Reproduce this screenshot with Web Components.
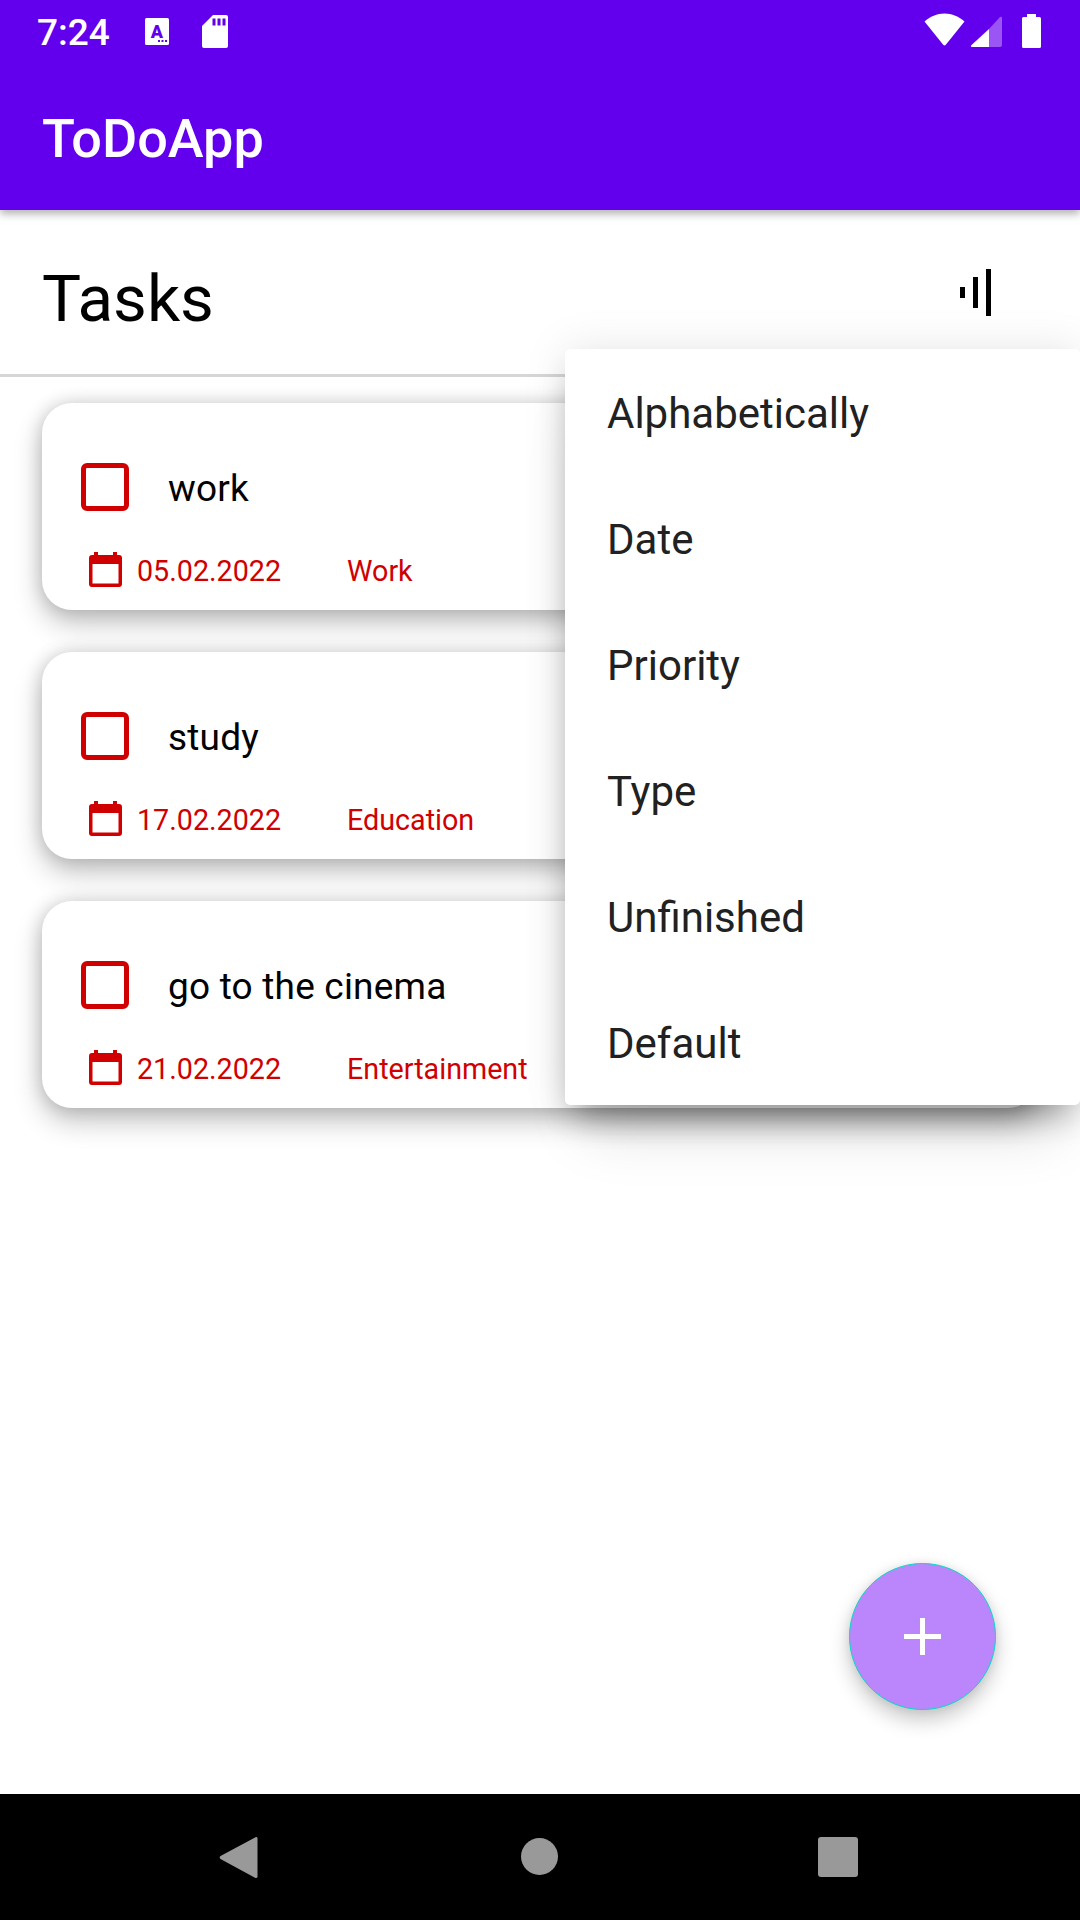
<!DOCTYPE html>
<html>
<head>
<meta charset="utf-8">
<title>ToDoApp</title>
<style>
  html, body { margin: 0; padding: 0; background: #fff; }
  body { font-family: Roboto, "Liberation Sans", sans-serif; }
</style>
</head>
<body>
<todo-app>
  <task-card title="work" date="05.02.2022" type="Work"></task-card>
  <task-card title="study" date="17.02.2022" type="Education"></task-card>
  <task-card title="go to the cinema" date="21.02.2022" type="Entertainment"></task-card>
  <sort-menu slot="menu">
    <menu-item>Alphabetically</menu-item>
    <menu-item>Date</menu-item>
    <menu-item>Priority</menu-item>
    <menu-item>Type</menu-item>
    <menu-item>Unfinished</menu-item>
    <menu-item>Default</menu-item>
  </sort-menu>
</todo-app>
<script>
(function() {
  function define(name, html, init) {
    const template = document.createElement("template");
    template.innerHTML = html;
    customElements.define(name, class extends HTMLElement {
      constructor() {
        super();
        this.attachShadow({ mode: "open" });
        this.shadowRoot.appendChild(template.content.cloneNode(true));
      }
      connectedCallback() {
        if (init) init(this, this.shadowRoot);
      }
    });
  }

  define("status-bar", `
    <style>
      :host { display: flex; align-items: flex-start; height: 63px; color: #fff; position: relative; }
      .time { margin: 11px 0 0 37px; font-size: 37px; line-height: 44px; font-weight: 500; width: 108px; }
      svg { display: block; flex: none; }
      .note { margin-top: 18px; }
      .sd { margin: 15px 0 0 33px; }
      .wifi { margin: 13px 0 0 auto; }
      .signal { margin: 16px 0 0 6px; }
      .battery { margin: 14px 39px 0 20px; }
    </style>
    <span class="time">7:24</span>
    <svg class="note" width="24" height="27" viewBox="0 0 24 27">
      <rect width="24" height="27" rx="1.5" fill="#fff"/>
      <text x="12" y="20" text-anchor="middle" font-family="Roboto" font-weight="900" font-size="18" fill="#6200ee">A</text>
      <rect x="13" y="22" width="2" height="2" fill="#6200ee"/>
      <rect x="16.500" y="22" width="2" height="2" fill="#6200ee"/>
      <rect x="20" y="22" width="2" height="2" fill="#6200ee"/>
    </svg>
    <svg class="sd" width="26" height="33" viewBox="0 0 26 33">
      <path fill="#fff" d="M11 0H24a2 2 0 0 1 2 2V31a2 2 0 0 1-2 2H2a2 2 0 0 1-2-2V11z"/>
      <rect x="10.500" y="3.500" width="3" height="7" fill="#6200ee"/>
      <rect x="15.500" y="3.500" width="3" height="7" fill="#6200ee"/>
      <rect x="20.500" y="3.500" width="3" height="7" fill="#6200ee"/>
    </svg>
    <svg class="wifi" width="41" height="33" viewBox="0 0 41 33">
      <path fill="#fff" d="M0.500 8.500C6 3.500 13 0.500 20.500 0.500S35 3.500 40.500 8.500L21.800 31.800a1.700 1.700 0 0 1-2.600 0z"/>
    </svg>
    <svg class="signal" width="31" height="31" viewBox="0 0 31 31">
      <path fill="#9b55f5" d="M18 13 L29 1 a1.200 1.200 0 0 1 2 .8V29a2 2 0 0 1-2 2H18z"/>
      <path fill="#fff" d="M18 13V31H1a1 1 0 0 1-.7-1.700z"/>
    </svg>
    <svg class="battery" width="19" height="34" viewBox="0 0 19 34">
      <path fill="#fff" d="M5 0H14V3H17.500a1.500 1.500 0 0 1 1.500 1.500V32.500a1.500 1.500 0 0 1-1.500 1.500H1.500A1.500 1.500 0 0 1 0 32.500V4.500A1.500 1.500 0 0 1 1.500 3H5z"/>
    </svg>
  `);

  define("app-bar", `
    <style>
      :host { display: block; background: #6200ee; color: #fff; box-shadow: 0 4px 8px rgba(0,0,0,.3); position: relative; z-index: 2; }
      .title { display: flex; align-items: center; height: 147px; padding: 4px 0 0 42px; box-sizing: border-box; font-size: 54px; font-weight: 500; }
    </style>
    <status-bar></status-bar>
    <div class="title"><slot></slot></div>
  `);

  define("tasks-header", `
    <style>
      :host { display: flex; align-items: center; justify-content: space-between; height: 164px; padding: 0 89px 0 42px; border-bottom: 3px solid #d6d6d6; }
      .name { font-size: 65.500px; color: #000; padding-top: 12px; }
      svg { display: block; }
    </style>
    <span class="name"><slot></slot></span>
    <svg width="31" height="47" viewBox="0 0 31 47" fill="#000">
      <rect x="0" y="18" width="5" height="11"/>
      <rect x="13" y="8" width="5" height="31"/>
      <rect x="26" y="0" width="5" height="47"/>
    </svg>
  `);

  define("task-card", `
    <style>
      :host { display: block; height: 207px; box-sizing: border-box; padding: 60px 39px 0; background: #fff; border-radius: 30px;
        box-shadow: 0 13px 28px rgba(0,0,0,.24), 0 0 18px rgba(0,0,0,.16); color: #d00000; font-family: Roboto, sans-serif; }
      .top { display: flex; align-items: center; height: 48px; }
      .box { width: 48px; height: 48px; box-sizing: border-box; border: 5.250px solid #d00000; border-radius: 6px; flex: none; }
      .title { margin: 2px 0 0 39px; font-size: 37px; color: #000; letter-spacing: .2px; }
      .meta { display: flex; align-items: center; height: 35px; margin: 41px 0 0 8px; font-size: 28.700px; }
      svg { display: block; flex: none; }
      .date { width: 210px; margin: 2px 0 0 15px; }
      .type { margin-top: 2px; }
    </style>
    <div class="top"><span class="box"></span><span class="title"></span></div>
    <div class="meta">
      <svg width="33" height="35" viewBox="0 0 33 35">
        <path fill="#d00000" d="M5 0H9V3H24V0H28V3H30a3 3 0 0 1 3 3V32a3 3 0 0 1-3 3H3a3 3 0 0 1-3-3V6a3 3 0 0 1 3-3H5zM3.500 12V31.500H29.500V12z"/>
      </svg>
      <span class="date"></span><span class="type"></span>
    </div>
  `, function(host, root) {
    root.querySelector(".title").textContent = host.getAttribute("title");
    root.querySelector(".date").textContent = host.getAttribute("date");
    root.querySelector(".type").textContent = host.getAttribute("type");
    host.removeAttribute("title");
  });

  define("menu-item", `
    <style>
      :host { display: flex; align-items: center; height: 126px; box-sizing: border-box; padding: 2px 0 0 42px; font-size: 42px; color: #212121; }
    </style>
    <slot></slot>
  `);

  define("sort-menu", `
    <style>
      :host { display: block; position: absolute; left: 565px; top: 349px; width: 515px; background: #fff; border-radius: 5px; z-index: 3;
        box-shadow: 0 20px 30px -10px rgba(0,0,0,.3), 0 45px 55px -20px rgba(0,0,0,.15), 0 0 45px rgba(0,0,0,.1); }
    </style>
    <slot></slot>
  `);

  define("add-button", `
    <style>
      :host { display: flex; align-items: center; justify-content: center; position: absolute; left: 849px; top: 1563px; width: 147px; height: 147px;
        box-sizing: border-box; border-radius: 50%; background: #bb86fc; border: 1px solid #03dac5; box-shadow: 0 10px 20px rgba(0,0,0,.22), 0 0 10px rgba(0,0,0,.08); }
      svg { display: block; margin-bottom: 1px; }
    </style>
    <svg width="37" height="37" viewBox="0 0 37 37" fill="#fff">
      <rect x="16" y="0" width="5" height="37"/>
      <rect x="0" y="16" width="37" height="5"/>
    </svg>
  `);

  define("nav-bar", `
    <style>
      :host { display: block; height: 126px; background: #000; position: relative; }
      svg { display: block; position: absolute; }
    </style>
    <svg style="left:219px;top:42px" width="39" height="43" viewBox="0 0 39 43">
      <path fill="#999" d="M37 1a1.500 1.500 0 0 1 1.500 1V41a1.500 1.500 0 0 1-1.500 1 1.500 1.500 0 0 1-1-.3L1.500 23a2 2 0 0 1 0-3z"/>
    </svg>
    <svg style="left:521px;top:44px" width="37" height="37" viewBox="0 0 37 37"><circle cx="18.500" cy="18.500" r="18.500" fill="#999"/></svg>
    <svg style="left:818px;top:43px" width="40" height="40" viewBox="0 0 40 40"><rect width="40" height="40" rx="3" fill="#999"/></svg>
  `);

  define("todo-app", `
    <style>
      :host { display: flex; flex-direction: column; position: relative; width: 1080px; height: 1920px; overflow: hidden; background: #fff; font-family: Roboto, sans-serif; }
      main { flex: 1; display: flex; flex-direction: column; min-height: 0; }
      .list { display: flex; flex-direction: column; gap: 42px; padding: 26px 42px 0; }
    </style>
    <app-bar>ToDoApp</app-bar>
    <main>
      <tasks-header>Tasks</tasks-header>
      <div class="list"><slot></slot></div>
    </main>
    <slot name="menu"></slot>
    <add-button></add-button>
    <nav-bar></nav-bar>
  `);
})();
</script>
</body>
</html>
